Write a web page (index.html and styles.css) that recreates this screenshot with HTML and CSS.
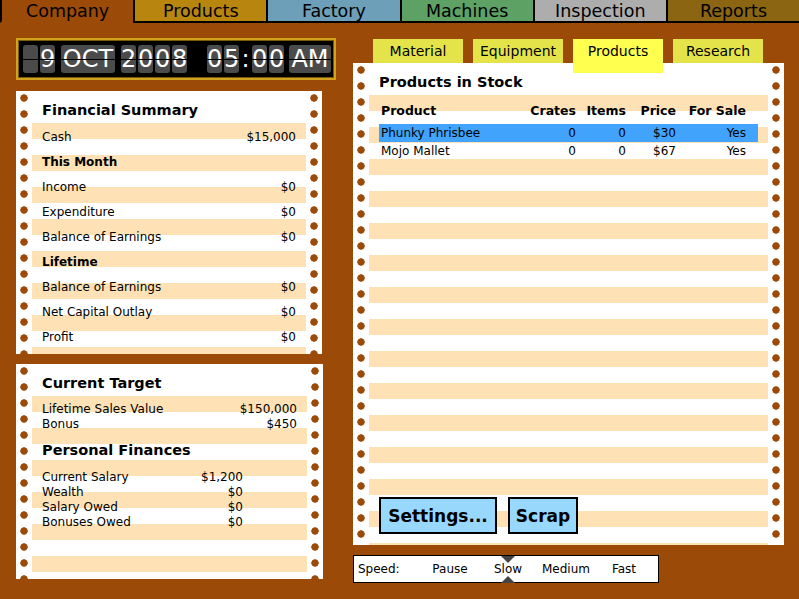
FILE: index.html
```html
<!DOCTYPE html>
<html lang="en">
<head>
  <meta charset="UTF-8" />
  <title>Company</title>
  <link rel="stylesheet" href="styles.css">
</head>
<body>

  <nav class="tabs">
    <div class="tab tab-company active">Company</div>
    <div class="tab tab-products">Products</div>
    <div class="tab tab-factory">Factory</div>
    <div class="tab tab-machines">Machines</div>
    <div class="tab tab-inspection">Inspection</div>
    <div class="tab tab-reports">Reports</div>
  </nav>

  <main class="main">

    <div class="left-col">
      <div class="clock">
        <div class="flip-group"><span class="flip"></span><span class="flip">9</span></div>
        <div class="flip-group"><span class="flip flip-wide">OCT</span></div>
        <div class="flip-group"><span class="flip">2</span><span class="flip">0</span><span class="flip">0</span><span class="flip">8</span></div>
        <div class="flip-group time"><span class="flip">0</span><span class="flip">5</span><span class="colon">:</span><span class="flip">0</span><span class="flip">0</span></div>
        <div class="flip-group"><span class="flip flip-ampm">AM</span></div>
      </div>

      <section class="sheet sheet-summary">
        <h2 class="sheet-title">Financial Summary</h2>
        <div class="summary-rows">
          <div class="row"><span>Cash</span><span>$15,000</span></div>
          <div class="row row-head">This Month</div>
          <div class="row"><span>Income</span><span>$0</span></div>
          <div class="row"><span>Expenditure</span><span>$0</span></div>
          <div class="row"><span>Balance of Earnings</span><span>$0</span></div>
          <div class="row row-head">Lifetime</div>
          <div class="row"><span>Balance of Earnings</span><span>$0</span></div>
          <div class="row"><span>Net Capital Outlay</span><span>$0</span></div>
          <div class="row"><span>Profit</span><span>$0</span></div>
        </div>
      </section>

      <section class="sheet sheet-target">
        <h2 class="sheet-title">Current Target</h2>
        <div class="target-list">
          <div class="line"><span>Lifetime Sales Value</span><span>$150,000</span></div>
          <div class="line"><span>Bonus</span><span>$450</span></div>
        </div>
        <h2 class="sheet-title personal-title">Personal Finances</h2>
        <div class="personal-list">
          <div class="line"><span>Current Salary</span><span>$1,200</span></div>
          <div class="line"><span>Wealth</span><span>$0</span></div>
          <div class="line"><span>Salary Owed</span><span>$0</span></div>
          <div class="line"><span>Bonuses Owed</span><span>$0</span></div>
        </div>
      </section>
    </div>

    <div class="right-col">
      <div class="subtabs">
        <div class="subtab">Material</div>
        <div class="subtab">Equipment</div>
        <div class="subtab active">Products</div>
        <div class="subtab">Research</div>
      </div>

      <section class="sheet sheet-stock">
        <h2 class="sheet-title">Products in Stock</h2>
        <div class="stock-table">
          <div class="stock-row stock-header">
            <span class="col-name">Product</span><span>Crates</span><span>Items</span><span>Price</span><span>For Sale</span>
          </div>
          <div class="stock-row selected">
            <span class="col-name">Phunky Phrisbee</span><span>0</span><span>0</span><span>$30</span><span>Yes</span>
          </div>
          <div class="stock-row">
            <span class="col-name">Mojo Mallet</span><span>0</span><span>0</span><span>$67</span><span>Yes</span>
          </div>
        </div>

        <div class="actions">
          <button class="btn btn-settings">Settings...</button>
          <button class="btn btn-scrap">Scrap</button>
        </div>
      </section>

      <div class="speed">
        <span class="speed-label">Speed:</span>
        <span class="speed-opt">Pause</span>
        <span class="speed-opt current">Slow</span>
        <span class="speed-opt">Medium</span>
        <span class="speed-opt">Fast</span>
      </div>
    </div>

  </main>

</body>
</html>
```

FILE: styles.css
```css
:root {
  --bg: #9c4a08;
  --stripe: #fee2b6;
  --ink: #000;
  --subtab: #e4e44a;
  --subtab-on: #ffff4f;
  --select: #41a3fb;
  --button: #97d8fc;
}

* {
  margin: 0;
  padding: 0;
  box-sizing: border-box;
}

html, body {
  width: 799px;
  height: 599px;
  overflow: hidden;
}

body {
  background-color: var(--bg);
  color: var(--ink);
  font-family: "DejaVu Sans", Verdana, sans-serif;
  font-size: 12px;
}

/* === top tabs === */
.tabs {
  display: flex;
  height: 23px;
}

.tab {
  flex: 1;
  height: 23px;
  border-left: 2px solid #000;
  border-bottom: 2px solid #000;
  font-size: 17.5px;
  line-height: 22px;
  text-align: center;
}

.tab.active { border-bottom-color: var(--bg); }
.tab-products { background-color: #b8850f; }
.tab-factory { background-color: #6e9fb8; }
.tab-machines { background-color: #5da165; }
.tab-inspection { background-color: #adadad; }
.tab-reports { background-color: #8b6511; }

/* === layout === */
.main {
  display: flex;
  padding: 15px 0 0 16px;
}

.left-col {
  width: 320px;
  display: flex;
  flex-direction: column;
}

.right-col {
  width: 431px;
  margin-left: 17px;
  margin-top: 1px;
  display: flex;
  flex-direction: column;
}

/* === clock === */
.clock {
  display: flex;
  height: 42px;
  padding: 5px 5px;
  background-color: #000;
  border: 2px solid #d3a21c;
  box-shadow: inset 0 0 0 1px #7a5a0c;
}

.flip-group {
  display: flex;
  gap: 2px;
  margin-right: 6px;
}

.flip-group.time {
  margin-left: 14px;
  margin-right: 5px;
}

.flip {
  position: relative;
  width: 15px;
  height: 28px;
  background-color: #4b4b4b;
  border-radius: 3px;
  color: #fff;
  font-size: 24px;
  line-height: 29px;
  text-align: center;
}

.flip::after {
  content: "";
  position: absolute;
  left: -1px;
  right: -1px;
  top: 14px;
  height: 1px;
  background-color: #000;
}

.flip-wide { width: 54px; }
.flip-ampm { width: 42px; }

.colon {
  width: 9px;
  color: #fff;
  font-size: 24px;
  line-height: 29px;
  text-align: center;
}

/* === tractor-feed sheets === */
.sheet {
  background:
    radial-gradient(circle at 8px 8px, var(--bg) 3.4px, transparent 4px) 0 -1px / 16px 16px repeat-y,
    radial-gradient(circle at 8px 8px, var(--bg) 3.4px, transparent 4px) 100% -1px / 16px 16px repeat-y,
    repeating-linear-gradient(to bottom, transparent 0 16px, var(--stripe) 16px 32px) 16px 16px / calc(100% - 32px) calc(100% - 16px) no-repeat,
    #fff;
  padding: 8px 26px 0 26px;
}

.sheet-title {
  font-size: 14.5px;
  font-weight: bold;
  line-height: 24px;
}

.sheet-summary {
  width: 306px;
  height: 263px;
  margin-top: 11px;
  padding-top: 7px;
}

.summary-rows { margin-top: 3px; }

.row {
  display: flex;
  justify-content: space-between;
  line-height: 25px;
  height: 25px;
}

.row-head { font-weight: bold; }

.sheet-target {
  width: 307px;
  height: 215px;
  margin-top: 10px;
  padding-top: 7px;
}

.target-list { margin-top: 7px; }

.line {
  display: flex;
  justify-content: space-between;
  line-height: 15px;
  height: 15px;
}

.personal-title { margin-top: 6px; }

.personal-list {
  width: 201px;
  margin-top: 8px;
}

/* === right column === */
.subtabs {
  display: flex;
  gap: 10px;
  padding-left: 20px;
  height: 24px;
}

.subtab {
  width: 90px;
  height: 24px;
  background-color: var(--subtab);
  font-size: 14px;
  line-height: 24px;
  text-align: center;
}

.subtab.active {
  position: relative;
  z-index: 1;
  height: 34px;
  background-color: var(--subtab-on);
}

.sheet-stock {
  height: 482px;
  display: flex;
  flex-direction: column;
  padding: 7px 26px 11px 26px;
}

.stock-table { margin-top: 7px; }

.stock-row {
  display: grid;
  grid-template-columns: 1fr 50px 50px 50px 70px;
  padding: 0 12px 0 2px;
  height: 18px;
  line-height: 19px;
  text-align: right;
}

.stock-row .col-name { text-align: left; }

.stock-header {
  font-weight: bold;
  font-size: 12.5px;
  height: 20px;
  line-height: 20px;
  margin-bottom: 3px;
}

.stock-row.selected { background-color: var(--select); }

.actions {
  margin-top: auto;
  display: flex;
  gap: 11px;
}

.btn {
  height: 37px;
  background-color: var(--button);
  border: 2px solid #000;
  font-family: "DejaVu Sans", Verdana, sans-serif;
  font-size: 17px;
  font-weight: bold;
  color: #000;
}

.btn-settings { width: 118px; }
.btn-scrap { width: 70px; }

/* === speed control === */
.speed {
  display: flex;
  align-items: center;
  width: 306px;
  height: 28px;
  margin-top: 10px;
  background-color: #fff;
  border: 1.5px solid #000;
  padding-left: 4px;
  font-size: 12px;
}

.speed-label { width: 63px; }

.speed-opt {
  position: relative;
  width: 58px;
  text-align: center;
  line-height: 25px;
}

.speed-opt.current::before,
.speed-opt.current::after {
  content: "";
  position: absolute;
  left: 22px;
  border-left: 7px solid transparent;
  border-right: 7px solid transparent;
}

.speed-opt.current::before {
  top: -1px;
  border-top: 7px solid #444;
}

.speed-opt.current::after {
  bottom: -1px;
  border-bottom: 7px solid #444;
}
```
